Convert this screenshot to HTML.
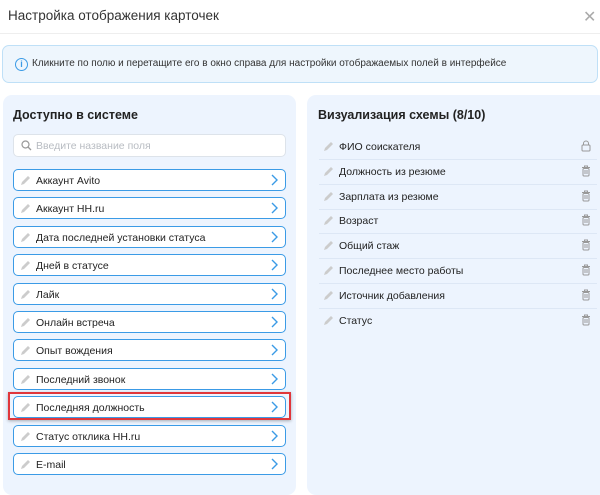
<!DOCTYPE html>
<html><head><meta charset="utf-8"><style>
*{box-sizing:border-box;margin:0;padding:0}
body{width:600px;height:479px;overflow:hidden;background:#fff;font-family:"Liberation Sans",sans-serif;color:#222;position:relative}
.title{position:absolute;left:8px;top:8px;font-size:13.5px;color:#333}
.close{position:absolute;left:583px;top:7px;font-size:16px;color:#aaa}
.hr{position:absolute;left:0;right:0;top:33px;border-top:1px solid #eee}
.info{position:absolute;left:2px;top:45px;width:596px;height:38px;background:#eef6fd;border:1px solid #bfe0f7;border-radius:7px;font-size:10px;color:#333;padding:12px 0 0 29px}
.info .ic{position:absolute;left:12px;top:12px;width:13px;height:13px;border:1.3px solid #3b9be6;border-radius:50%;color:#3b9be6;font-size:9px;font-weight:bold;text-align:center;line-height:11px}
.lp{position:absolute;left:3px;top:95px;width:293px;height:400px;background:#edf4fe;border-radius:9px}
.rp{position:absolute;left:307px;top:95px;width:300px;height:400px;background:#edf4fe;border-radius:9px}
.h{position:absolute;top:13px;font-size:12.5px;font-weight:bold;color:#222}
.search{position:absolute;left:10px;top:39px;width:273px;height:23px;background:#fff;border:1px solid #dde3ea;border-radius:5px;font-size:10.5px;color:#b8bcc2;padding:5px 0 0 22px}
.search svg{position:absolute;left:7px;top:5px}
.it{position:absolute;left:13px;width:273px;height:22px;background:#fff;border:1.3px solid #3b9be6;border-radius:5px;font-size:10.5px;color:#222;padding:5px 0 0 22px}
.pen{position:absolute;left:6px;top:5px}
.chev{position:absolute;right:7px;top:4px}
.red{position:absolute;left:8px;top:392px;width:283px;height:28px;border:2px solid #e0363b;box-shadow:0 1px 3px rgba(0,0,0,.3)}
.row{position:absolute;left:12px;width:278px;height:25px;border-bottom:1px solid #dde7f5;font-size:10.5px;color:#222;padding:6px 0 0 20px}
.row .pen{left:4px;top:6px}
.row .ico{position:absolute;right:6px;top:5px}
</style></head><body>
<div class="title">Настройка отображения карточек</div>
<div class="close">✕</div>
<div class="hr"></div>
<div class="info"><div class="ic">i</div>Кликните по полю и перетащите его в окно справа для настройки отображаемых полей в интерфейсе</div>
<div class="lp">
<div class="h" style="left:10px">Доступно в системе</div>
<div class="search"><svg width="11" height="11" viewBox="0 0 11 11"><circle cx="4.5" cy="4.5" r="3.5" fill="none" stroke="#999" stroke-width="1.2"/><path d="M7 7l3 3" stroke="#999" stroke-width="1.3"/></svg>Введите название поля</div>
</div>
<div class="rp">
<div class="h" style="left:11px">Визуализация схемы (8/10)</div>
</div>
<div id="L"></div><div id="R"></div>
<div class="red"></div>
<script>
var pen='<svg class="pen" width="11" height="11" viewBox="0 0 11 11"><path d="M1 10l1-3 6-6 2 2-6 6z" fill="#ccc"/></svg>';
var chev='<svg class="chev" width="8" height="12" viewBox="0 0 8 12"><path d="M2 1l5 5-5 5" fill="none" stroke="#3b9be6" stroke-width="1.4"/></svg>';
var L=["Аккаунт Avito","Аккаунт HH.ru","Дата последней установки статуса","Дней в статусе","Лайк","Онлайн встреча","Опыт вождения","Последний звонок","Последняя должность","Статус отклика HH.ru","E-mail"];
var h='';L.forEach(function(t,i){h+='<div class="it" style="top:'+(169+i*28.4)+'px">'+pen+t+chev+'</div>'});
document.getElementById('L').innerHTML=h;
var R=["ФИО соискателя","Должность из резюме","Зарплата из резюме","Возраст","Общий стаж","Последнее место работы","Источник добавления","Статус"];
var lock='<svg class="ico" width="10" height="12" viewBox="0 0 10 12"><path d="M2.5 5V3.5a2.5 2.5 0 0 1 5 0V5" fill="none" stroke="#999"/><rect x="1" y="5" width="8" height="6" rx="1" fill="none" stroke="#999"/></svg>';
var trash='<svg class="ico" width="10" height="12" viewBox="0 0 10 12"><path d="M1 2.5h8M3.5 2.5V1h3v1.5" fill="none" stroke="#999"/><rect x="2" y="3.5" width="6" height="7.5" rx="1" fill="none" stroke="#999"/><path d="M4 5v4M6 5v4" stroke="#999"/></svg>';
h='';R.forEach(function(t,i){h+='<div class="row" style="left:319px;top:'+(135+i*24.8)+'px;'+(i==7?'border:0':'')+'">'+pen+t+(i?trash:lock)+'</div>'});
document.getElementById('R').innerHTML=h;
</script>
</body></html>
